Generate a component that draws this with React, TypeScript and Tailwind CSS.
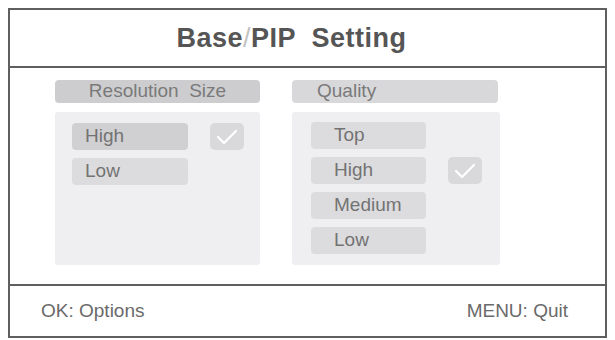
const resolutionItems = [
  { label: "High", selected: true },
  { label: "Low", selected: false },
];

const qualityItems = [
  { label: "Top", selected: false },
  { label: "High", selected: true },
  { label: "Medium", selected: false },
  { label: "Low", selected: false },
];

const CheckBox = ({ show }: { show: boolean }) =>
  show ? (
    <div className="ml-[22px] w-[34px] h-[27px] rounded-[5px] bg-[#d9d9db] flex items-center justify-center">
      <svg width="24" height="18" viewBox="0 0 24 18" fill="none">
        <polyline
          points="3,9 9,15 21,3"
          stroke="white"
          strokeWidth="2.2"
          strokeLinecap="round"
          strokeLinejoin="round"
        />
      </svg>
    </div>
  ) : null;

const App = () => {
  return (
    <div
      className="w-[615px] h-[340px] bg-white pl-[8px] pt-[8px]"
      style={{ fontFamily: '"Liberation Sans", Arial, sans-serif' }}
    >
      <div className="w-[599px] h-[330px] border-2 border-[#5f5f5f] flex flex-col">
        {/* Title */}
        <div className="h-[58px] border-b-2 border-[#5f5f5f] flex items-center justify-center pr-[32px]">
          <h1 className="text-[27px] font-bold text-[#555] tracking-[0.5px] whitespace-pre">
            Base<span className="font-normal text-[#c2c2c2]">/</span>PIP  Setting
          </h1>
        </div>

        {/* Body */}
        <div className="flex-1 pl-[45px] pt-[12px] flex gap-[32px]">
          <div className="w-[205px]">
            <div className="h-[23px] rounded-[4px] bg-[#cdcdcf] flex items-center justify-center text-[19px] text-[#7a7a7a] whitespace-pre">
              Resolution  Size
            </div>
            <div className="mt-[9px] h-[153px] rounded-[3px] bg-[#efeff1] pt-[11px] pl-[17px] flex flex-col gap-[8px]">
              {resolutionItems.map((item) => (
                <div key={item.label} className="flex items-center">
                  <div
                    className={`w-[116px] h-[27px] rounded-[4px] pl-[13px] flex items-center text-[19px] text-[#737373] ${
                      item.selected ? "bg-[#d0d0d2]" : "bg-[#dcdcde]"
                    }`}
                  >
                    {item.label}
                  </div>
                  <CheckBox show={item.selected} />
                </div>
              ))}
            </div>
          </div>

          <div className="w-[208px]">
            <div className="w-[206px] h-[23px] rounded-[4px] bg-[#d8d8da] flex items-center pl-[25px] text-[19px] text-[#7a7a7a]">
              Quality
            </div>
            <div className="mt-[9px] h-[153px] rounded-[3px] bg-[#efeff1] pt-[10px] pl-[19px] flex flex-col gap-[8px]">
              {qualityItems.map((item) => (
                <div key={item.label} className="flex items-center">
                  <div className="w-[115px] h-[27px] rounded-[4px] pl-[23px] flex items-center text-[19px] text-[#737373] bg-[#dcdcde]">
                    {item.label}
                  </div>
                  <CheckBox show={item.selected} />
                </div>
              ))}
            </div>
          </div>
        </div>

        {/* Footer */}
        <div className="h-[52px] border-t-2 border-[#5f5f5f] flex items-center justify-between pl-[31px] pr-[37px] text-[19px] text-[#6a6a6a]">
          <span>OK: Options</span>
          <span>MENU: Quit</span>
        </div>
      </div>
    </div>
  );
};

export default App;
